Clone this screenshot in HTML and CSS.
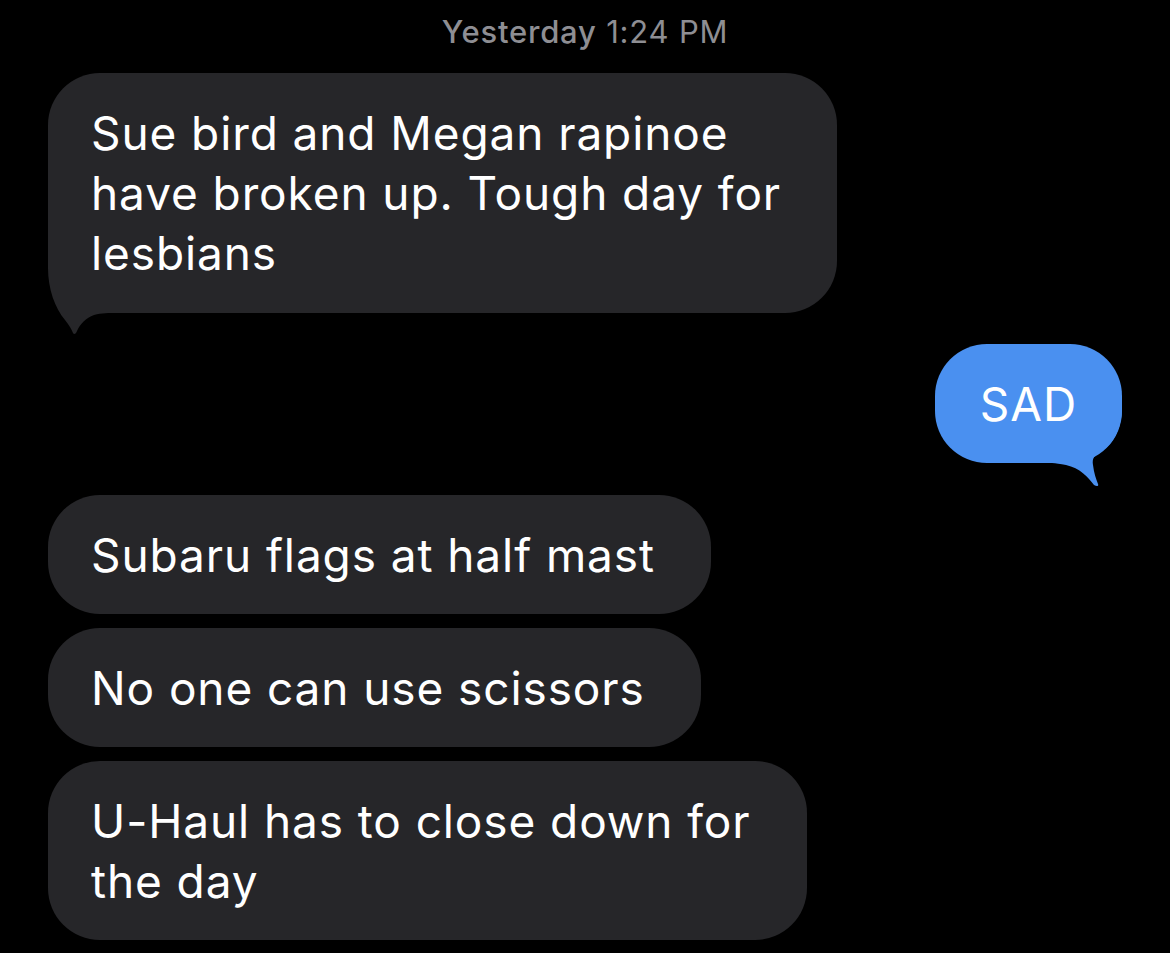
FILE: index.html
```html
<!DOCTYPE html>
<html lang="en">
<head>
<meta charset="utf-8">
<title>Messages</title>
<link rel="stylesheet" href="styles.css">
</head>
<body>
<main class="thread">
  <div class="timestamp"><span class="ts-day">Yesterday</span> 1:24 PM</div>

  <div class="group">
    <div class="bubble received">
      <svg class="tail tail-left" viewBox="0 -60 70 85" width="70" height="85" aria-hidden="true">
        <path d="M0,-60 L0,-45 C0,-24 7,-5 17,7 C21,12 24,17 25,20 C26,22 28,21 29,18 C32,11 38,5 46,2 C54,0 60,0 70,0 L70,-60 Z"/>
      </svg>
      <span class="text">Sue bird and Megan rapinoe<br>have broken up. Tough day for<br>lesbians</span>
    </div>
  </div>

  <div class="group sent-group">
    <div class="bubble sent">
      <svg class="tail tail-right" viewBox="-70 -60 70 85" width="70" height="85" aria-hidden="true">
        <path d="M0,-60 L0,-55 C0,-38 -7,-19 -22,-11 C-28,-8 -30,-4 -29,2 C-28,10 -26,16 -24,21 C-23,23 -25,24 -28,22 C-34,14 -42,5 -56,2 C-62,1 -66,0 -70,0 L-70,-60 Z"/>
      </svg>
      <span class="text">SAD</span>
    </div>
  </div>

  <div class="group stack">
    <div class="bubble received"><span class="text">Subaru flags at half mast</span></div>
    <div class="bubble received"><span class="text">No one can use scissors</span></div>
    <div class="bubble received"><span class="text">U-Haul has to close down for<br>the day</span></div>
  </div>
</main>
</body>
</html>
```

FILE: styles.css
```css
html, body {
  margin: 0;
  padding: 0;
  background: #000;
}

body {
  font-family: Inter, "Noto Sans", "Liberation Sans", sans-serif;
  color: #fff;
  -webkit-font-smoothing: antialiased;
}

.thread {
  display: flex;
  flex-direction: column;
  gap: 31px;
  padding: 14px 48px 0;
}

.timestamp {
  text-align: center;
  color: #8e8e93;
  font-size: 31px;
  line-height: 36px;
  letter-spacing: 0.8px;
  margin-bottom: -8px;
}

.ts-day {
  font-weight: 500;
}

.group {
  display: flex;
  flex-direction: column;
  align-items: flex-start;
}

.sent-group {
  align-items: flex-end;
}

.stack {
  gap: 14px;
  margin-top: 1px;
}

.bubble {
  position: relative;
  font-size: 46px;
  line-height: 60px;
  letter-spacing: 0.9px;
  padding: 30px 56px 30px 43px;
  border-radius: 52px;
  background: #262629;
  white-space: nowrap;
}

.bubble .text {
  position: relative;
  z-index: 1;
}

.stack .bubble {
  padding-bottom: 29px;
}

.sent {
  background: #4a90f0;
  padding: 30px 45px 29px 45px;
}

.tail {
  position: absolute;
  bottom: -25px;
  display: block;
  z-index: 0;
}

.tail-left {
  left: 0;
  fill: #262629;
}

.tail-right {
  right: 0;
  fill: #4a90f0;
}
```
